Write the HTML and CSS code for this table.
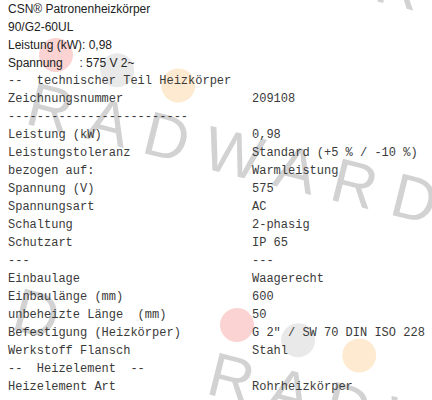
FILE: index.html
```html
<!DOCTYPE html>
<html lang="de">
<head>
    <meta charset="UTF-8">
    <meta name="viewport" content="width=device-width, initial-scale=1.0">
    <title>CSN Patronenheizkörper</title>
    <link rel="stylesheet" href="styles.css">
</head>
<body>
    <div class="watermark" style="left: 56px; top: 55px;">
        <div class="dots"><span class="dot pink"></span><span class="dot grey"></span><span class="dot orange"></span></div>
        <div class="wm-text">RADWARD</div>
    </div>
    <div class="watermark" style="left: 237px; top: 325px;">
        <div class="dots"><span class="dot pink"></span><span class="dot grey"></span><span class="dot orange"></span></div>
        <div class="wm-text">RADWARD</div>
    </div>
    <div class="watermark" style="left: -322px; top: 170px;">
        <div class="dots"><span class="dot pink"></span><span class="dot grey"></span><span class="dot orange"></span></div>
        <div class="wm-text">RADWARD</div>
    </div>
    <div class="watermark" style="left: 405px; top: -68px;">
        <div class="dots"><span class="dot pink"></span><span class="dot grey"></span><span class="dot orange"></span></div>
        <div class="wm-text">RADWARD</div>
    </div>

    <div class="product">
        <div class="title">CSN® Patronenheizkörper</div>
        <div class="title">90/G2-60UL</div>
        <div class="title">Leistung (kW): 0,98</div>
        <div class="title">Spannung     : 575 V 2~</div>
    </div>

    <div class="specs">
        <div class="full">--  technischer Teil Heizkörper</div>
        <div>Zeichnungsnummer</div><div>209108</div>
        <div>-------------------------</div><div></div>
        <div>Leistung (kW)</div><div>0,98</div>
        <div>Leistungstoleranz</div><div>Standard (+5 % / -10 %)</div>
        <div>bezogen auf:</div><div>Warmleistung</div>
        <div>Spannung (V)</div><div>575</div>
        <div>Spannungsart</div><div>AC</div>
        <div>Schaltung</div><div>2-phasig</div>
        <div>Schutzart</div><div>IP 65</div>
        <div>---</div><div>---</div>
        <div>Einbaulage</div><div>Waagerecht</div>
        <div>Einbaulänge (mm)</div><div>600</div>
        <div>unbeheizte Länge  (mm)</div><div>50</div>
        <div>Befestigung (Heizkörper)</div><div>G 2" / SW 70 DIN ISO 228</div>
        <div>Werkstoff Flansch</div><div>Stahl</div>
        <div>--  Heizelement  --</div><div></div>
        <div>Heizelement Art</div><div>Rohrheizkörper</div>
    </div>
</body>
</html>
```

FILE: styles.css
```css
body {
    margin: 0;
    padding-left: 8px;
    background-color: #fff;
    color: #333;
    overflow: hidden;
}
.product {
    font-family: "Liberation Sans", Arial, sans-serif;
    font-size: 12px;
    line-height: 18px;
    color: #222;
}
.title {
    white-space: pre;
}
.specs {
    display: grid;
    grid-template-columns: 244px auto;
    font-family: "Liberation Mono", "Courier New", monospace;
    font-size: 12px;
    line-height: 18px;
    color: #3a3a3a;
    white-space: pre;
}
.specs .full {
    grid-column: 1 / 3;
}

/* watermark */
.watermark {
    position: absolute;
    z-index: -1;
    transform: rotate(14deg);
    transform-origin: 0 0;
    pointer-events: none;
}
.dots {
    display: flex;
    gap: 29px;
    margin: -17px 0 0 -17px;
}
.dot {
    width: 34px;
    height: 34px;
    border-radius: 50%;
}
.pink {
    background-color: #fbd3d3;
}
.grey {
    background-color: #e9e9e9;
}
.orange {
    background-color: #fdead0;
}
.wm-text {
    margin: 5px 0 0 -15px;
    font-family: "Liberation Sans", Arial, sans-serif;
    font-size: 62px;
    line-height: 62px;
    letter-spacing: 17px;
    color: #d2d2d2;
    white-space: nowrap;
}
```
